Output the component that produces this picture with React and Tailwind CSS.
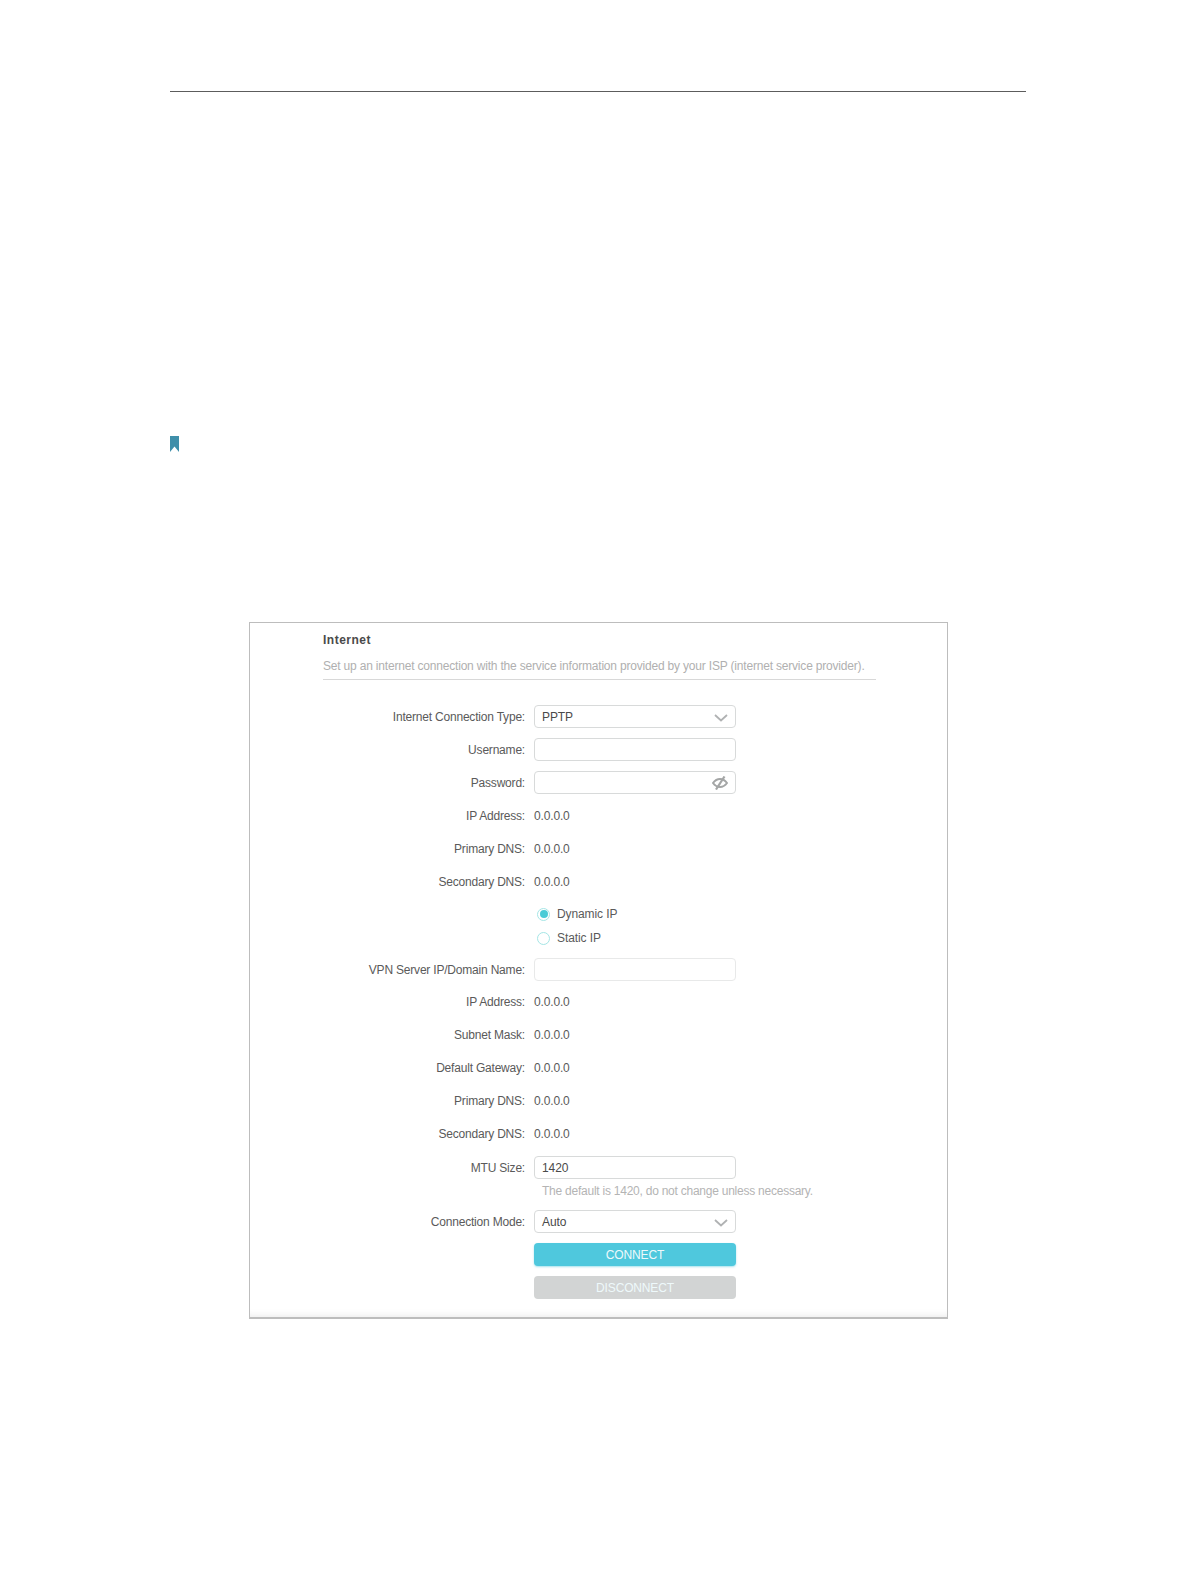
const valueRow = 'flex items-center h-[33px]';

function Label({ children }) {
  return <div className="w-[202px] mr-[9px] text-right text-[12px] tracking-[-0.2px] text-[#5a5a5a] whitespace-nowrap">{children}</div>;
}

function Chevron() {
  return (
    <svg width="14" height="8" viewBox="0 0 14 8" className="ml-auto -mr-[1px] mt-[3px]">
      <path d="M1 1l6 5.500L13 1" fill="none" stroke="#b0b2b3" strokeWidth="1.800" />
    </svg>
  );
}

function EyeOff() {
  return (
    <svg width="16" height="14" viewBox="0 0 16 14" className="ml-auto -mr-[1px]">
      <path d="M1 7c2-2.700 4.400-4 7-4s5 1.300 7 4c-2 2.700-4.400 4-7 4s-5-1.300-7-4z" fill="none" stroke="#a4a6a6" strokeWidth="2" />
      <path d="M4 13.500L12.500 0.500" stroke="#a4a6a6" strokeWidth="2.200" />
    </svg>
  );
}

function Field({ value, children, light }) {
  return (
    <div className={`flex items-center w-[202px] h-[23px] pl-[7px] pr-2 rounded-[4px] border text-[12px] tracking-[-0.1px] text-[#4a4a4a] ${light ? 'border-[#e8e9e9]' : 'border-[#d8dada]'}`}>
      {value}
      {children}
    </div>
  );
}

function InputRow({ label, value, children, light, className }) {
  return (
    <div className={`${valueRow} ${className ?? ''}`}>
      <Label>{label}</Label>
      <Field value={value} light={light}>{children}</Field>
    </div>
  );
}

function TextRow({ label, className }) {
  return (
    <div className={`${valueRow} ${className ?? ''}`}>
      <Label>{label}</Label>
      <div className="text-[12px] tracking-[-0.15px] text-[#5a5a5a]">0.0.0.0</div>
    </div>
  );
}

function Radio({ label, checked, className }) {
  return (
    <div className={`flex items-center h-[24px] ml-[211px] text-[12px] tracking-[-0.1px] text-[#5a5a5a] ${className ?? ''}`}>
      <div className="flex items-center justify-center w-[13px] h-[13px] ml-[3px] mr-[7px] rounded-full border-[1.5px] border-[#a5e6e6]">
        {checked && <div className="w-[8px] h-[8px] rounded-full bg-[#4acbd6]" />}
      </div>
      {label}
    </div>
  );
}

function Btn({ children, className }) {
  return (
    <div className={`flex items-center justify-center w-[202px] h-[23px] ml-[211px] rounded-[4px] text-[12px] tracking-[-0.15px] text-[#eef9fb] ${className}`}>
      {children}
    </div>
  );
}

export default function App() {
  return (
    <div className="w-[1196px] h-[1582px] bg-white pt-[91px] font-['Liberation_Sans',Arial,sans-serif]">
      <div className="ml-[170px] w-[856px] h-px bg-[#5c5c5c]" />
      <svg width="9" height="16" viewBox="0 0 9 16" className="block ml-[170px] mt-[344px]">
        <path d="M0 0h9v16L4.500 10.500 0 16z" fill="#3f8faa" />
      </svg>
      <div className="ml-[249px] mt-[170px] w-[699px] h-[697px] border border-[#bdbdbd] border-b-2 pl-[73px] pt-[8px] shadow-[inset_0_-8px_8px_-8px_#e4e4e4]">
        <div className="text-[12px] font-bold leading-[18px] text-[#4a4a4a] tracking-[0.5px]">Internet</div>
        <div className="w-[553px] h-[31px] pt-[8px] border-b border-[#d8d8d8] text-[12px] tracking-[-0.19px] leading-[18px] text-[#b0b0b0] whitespace-nowrap">
          Set up an internet connection with the service information provided by your ISP (internet service provider).
        </div>
        <div className="pt-[20px]">
          <InputRow label="Internet Connection Type:" value="PPTP"><Chevron /></InputRow>
          <InputRow label="Username:" />
          <InputRow label="Password:"><EyeOff /></InputRow>
          <TextRow label="IP Address:" />
          <TextRow label="Primary DNS:" />
          <TextRow label="Secondary DNS:" />
          <Radio label="Dynamic IP" checked className="mt-[4px]" />
          <Radio label="Static IP" />
          <InputRow label="VPN Server IP/Domain Name:" light className="mt-[3px]" />
          <TextRow label="IP Address:" className="-mt-[1px]" />
          <TextRow label="Subnet Mask:" />
          <TextRow label="Default Gateway:" />
          <TextRow label="Primary DNS:" />
          <TextRow label="Secondary DNS:" />
          <InputRow label="MTU Size:" value="1420" className="mt-[1px]" />
          <div className="ml-[219px] -mt-[2px] h-[23px] text-[12px] tracking-[-0.24px] leading-[18px] text-[#b4b4b4] whitespace-nowrap">
            The default is 1420, do not change unless necessary.
          </div>
          <InputRow label="Connection Mode:" value="Auto"><Chevron /></InputRow>
          <Btn className="mt-[5px] bg-[#4fc8dd] shadow-[0_1px_2px_rgba(79,200,221,0.5)]">CONNECT</Btn>
          <Btn className="mt-[10px] bg-[#d2d4d4]">DISCONNECT</Btn>
        </div>
      </div>
    </div>
  );
}
